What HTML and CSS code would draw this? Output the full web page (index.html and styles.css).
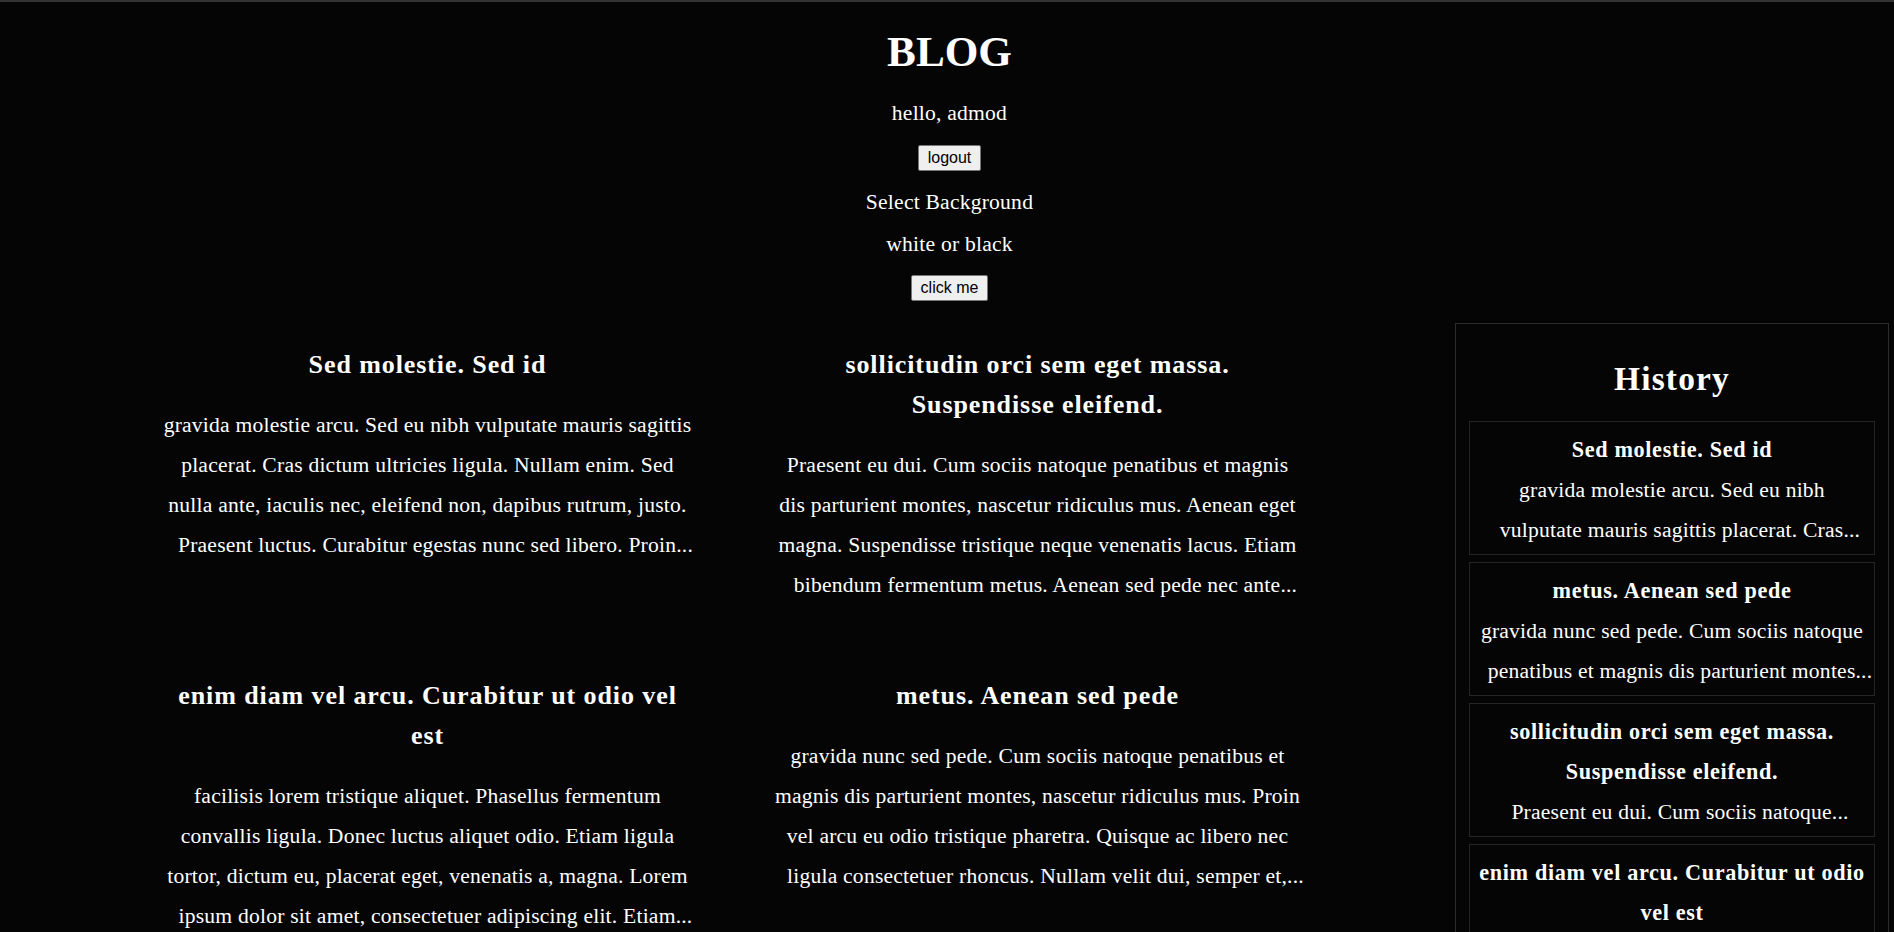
FILE: index.html
```html
<!DOCTYPE html>
<html lang="en">
<head>
<meta charset="utf-8">
<title>BLOG</title>
<link rel="stylesheet" href="styles.css">
</head>
<body>
<div class="topline"></div>
<header class="header">
  <h1 class="title">BLOG</h1>
  <p class="greet">hello, admod</p>
  <button class="btn logout">logout</button>
  <p class="select">Select Background</p>
  <p class="hint">white or black</p>
  <button class="btn click">click me</button>
</header>
<div class="layout">
  <main class="posts">
    <article class="post">
      <h3>Sed molestie. Sed id</h3>
      <p>gravida molestie arcu. Sed eu nibh vulputate mauris sagittis placerat. Cras dictum ultricies ligula. Nullam enim. Sed nulla ante, iaculis nec, eleifend non, dapibus rutrum, justo. Praesent luctus. Curabitur egestas nunc sed libero. Proin...<span class="tail"></span></p>
    </article>
    <article class="post">
      <h3>sollicitudin orci sem eget massa. Suspendisse eleifend.</h3>
      <p>Praesent eu dui. Cum sociis natoque penatibus et magnis dis parturient montes, nascetur ridiculus mus. Aenean eget magna. Suspendisse tristique neque venenatis lacus. Etiam bibendum fermentum metus. Aenean sed pede nec ante...<span class="tail"></span></p>
    </article>
    <article class="post">
      <h3>enim diam vel arcu. Curabitur ut odio vel est</h3>
      <p>facilisis lorem tristique aliquet. Phasellus fermentum convallis ligula. Donec luctus aliquet odio. Etiam ligula tortor, dictum eu, placerat eget, venenatis a, magna. Lorem ipsum dolor sit amet, consectetuer adipiscing elit. Etiam...<span class="tail"></span></p>
    </article>
    <article class="post">
      <h3>metus. Aenean sed pede</h3>
      <p>gravida nunc sed pede. Cum sociis natoque penatibus et magnis dis parturient montes, nascetur ridiculus mus. Proin vel arcu eu odio tristique pharetra. Quisque ac libero nec ligula consectetuer rhoncus. Nullam velit dui, semper et,...<span class="tail"></span></p>
    </article>
  </main>
  <aside class="sidebar">
    <h2>History</h2>
    <div class="hcard">
      <h4>Sed molestie. Sed id</h4>
      <p>gravida molestie arcu. Sed eu nibh vulputate mauris sagittis placerat. Cras...<span class="tail"></span></p>
    </div>
    <div class="hcard">
      <h4>metus. Aenean sed pede</h4>
      <p>gravida nunc sed pede. Cum sociis natoque penatibus et magnis dis parturient montes...<span class="tail"></span></p>
    </div>
    <div class="hcard">
      <h4>sollicitudin orci sem eget massa. Suspendisse eleifend.</h4>
      <p>Praesent eu dui. Cum sociis natoque...<span class="tail"></span></p>
    </div>
    <div class="hcard">
      <h4>enim diam vel arcu. Curabitur ut odio vel est</h4>
      <p>facilisis lorem tristique aliquet. Phasellus fermentum...<span class="tail"></span></p>
    </div>
  </aside>
</div>
</body>
</html>
```
FILE: styles.css
```css
html {
  scrollbar-width: none;
}

body {
  margin: 0;
  padding: 0 5px 0 10px;
  background: #050505;
  color: #ffffff;
  font-family: "Liberation Serif", "Times New Roman", serif;
  font-size: 21.6px;
  line-height: 40px;
  letter-spacing: 0.21px;
}

.topline {
  height: 2px;
  margin: 0 -5px 0 -10px;
  background: #343434;
}

.header {
  display: flex;
  flex-direction: column;
  align-items: center;
}

.title {
  margin: 30px 0 21px;
  font-size: 43.2px;
  line-height: 40px;
  letter-spacing: 0;
}

.header p {
  margin: 0;
}

.btn {
  font-family: "Liberation Sans", Arial, sans-serif;
  font-size: 16px;
  line-height: 18px;
  letter-spacing: 0;
  padding: 3px 9px;
  border: 1px solid #767676;
  border-radius: 2px;
  background: #efefef;
  color: #000000;
}

.logout {
  margin: 12px 0 11px;
}

.header .hint {
  margin-top: 2px;
}

.click {
  margin-top: 11px;
}

.layout {
  display: flex;
  align-items: flex-start;
  margin-top: 17px;
}

.posts {
  flex: 1;
  display: grid;
  grid-template-columns: repeat(2, 610px);
  justify-content: center;
  padding-top: 2px;
}

.post {
  padding: 25px 40px 26px;
  text-align: center;
}

.post h3 {
  margin: 0 0 20px;
  font-size: 26px;
  line-height: 40px;
  letter-spacing: 0.035em;
}

.post p {
  margin: 0 0 20px;
}

.tail {
  margin-right: -16px;
}

.sidebar {
  width: 434px;
  box-sizing: border-box;
  margin-top: 5px;
  padding: 35px 13px 13px;
  border: 1px solid #2c2c2c;
  text-align: center;
}

.sidebar h2 {
  margin: 0 0 22px;
  font-size: 33.4px;
  line-height: 40px;
  letter-spacing: 0.035em;
}

.hcard {
  margin-bottom: 7px;
  padding: 8px 6px 4px;
  border: 1px solid #252525;
}

.hcard h4 {
  margin: 0;
  font-size: 22.2px;
  line-height: 40px;
  letter-spacing: 0.03em;
}

.hcard p {
  margin: 0;
}
```
